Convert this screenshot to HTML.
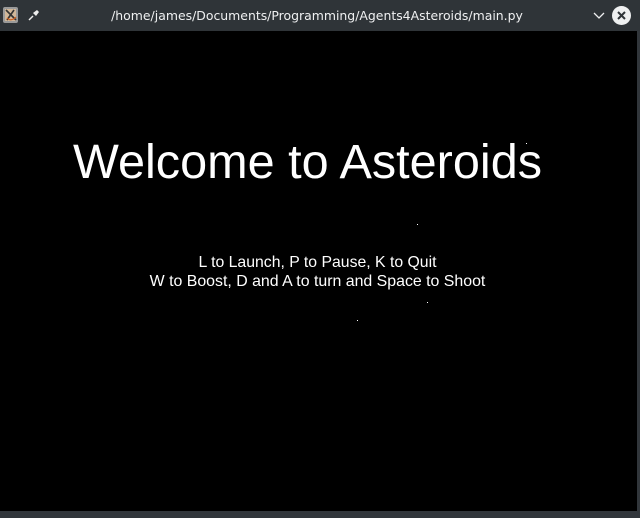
<!DOCTYPE html>
<html><head><style>
body{margin:0;width:640px;height:518px;background:#31363b;position:relative;overflow:hidden;font-family:"Liberation Sans",sans-serif}
#tb{position:absolute;left:0;top:0;width:640px;height:31px;background:#2f3438;}
#tb .t{position:absolute;left:0;width:634px;top:8px;text-align:center;color:#eff0f1;font-family:"DejaVu Sans",sans-serif;font-size:12.45px}
#g{position:absolute;left:0;top:31px;width:637px;height:480px;background:#000}
.c{position:absolute;left:0;width:635px;text-align:center;color:#fff;white-space:nowrap}
.s{position:absolute;width:1px;height:1px;background:#fff}
</style></head><body>
<div id="tb">
<div style="position:absolute;left:3px;top:7px;width:15px;height:16px;background:#9a9a9a;border-radius:2px"></div>
<div style="position:absolute;left:5px;top:9px;width:11px;height:12px;background:#d2b89a"></div>
<svg style="position:absolute;left:3px;top:7px" width="16" height="16"><path d="M3 3L13 13M11 3L4 13" stroke="#333" stroke-width="1.6"/><path d="M4 11q4 4 9-1" stroke="#d06020" fill="none" stroke-width="1.2"/></svg>
<svg style="position:absolute;left:28px;top:9px" width="12" height="12"><path d="M1 11L5 7" stroke="#eee" stroke-width="1.5"/><path d="M5 4L8 7L11 3L9 1Z" fill="#eee"/></svg>
<div class="t">/home/james/Documents/Programming/Agents4Asteroids/main.py</div>
<svg style="position:absolute;left:592px;top:11px" width="14" height="10"><path d="M2 2L7 7L12 2" stroke="#eff0f1" fill="none" stroke-width="1.3"/></svg>
<div style="position:absolute;left:612px;top:6px;width:19px;height:19px;border-radius:50%;background:#eff0f1"></div>
<svg style="position:absolute;left:612px;top:6px" width="19" height="19"><path d="M6 6L13 13M13 6L6 13" stroke="#2f3438" stroke-width="2"/></svg>
</div>
<div id="g">
<div class="c" style="top:103px;font-size:48.6px;left:-10px">Welcome to Asteroids</div>
<div class="c" style="top:223px;font-size:15.8px">L to Launch, P to Pause, K to Quit</div>
<div class="c" style="top:242px;font-size:15.9px">W to Boost, D and A to turn and Space to Shoot</div>
<div class="s" style="left:526px;top:112px"></div>
<div class="s" style="left:417px;top:193px"></div>
<div class="s" style="left:427px;top:271px"></div>
<div class="s" style="left:357px;top:289px"></div>
</div>
</body></html>
